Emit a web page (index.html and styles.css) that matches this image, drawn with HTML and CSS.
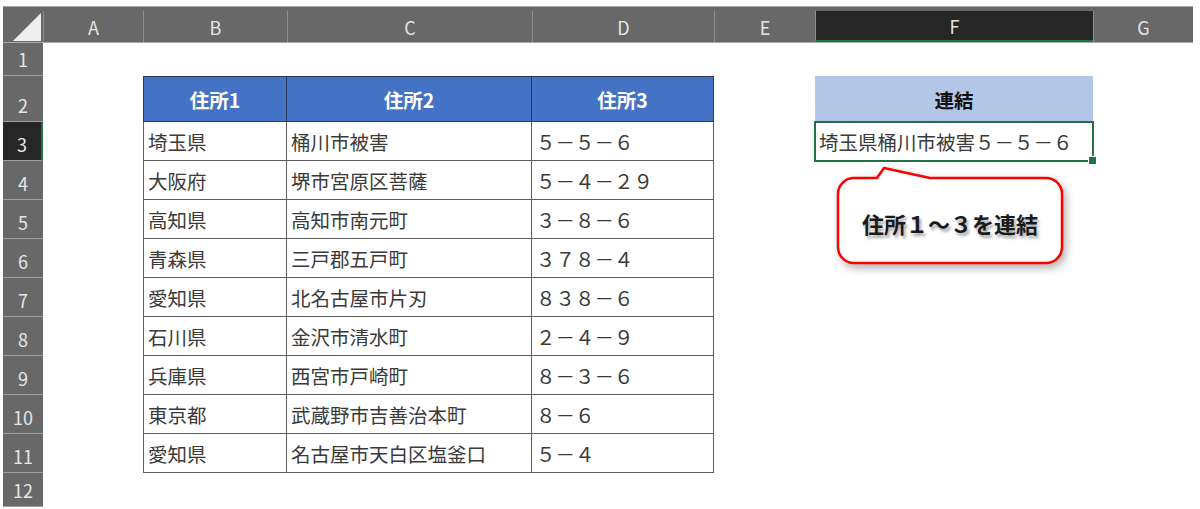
FILE: index.html
```html
<!DOCTYPE html>
<html lang="ja">
<head>
    <meta charset="UTF-8">
    <meta name="viewport" content="width=device-width, initial-scale=1.0">
    <title>住所の連結</title>
    <link rel="stylesheet" href="styles.css">
</head>
<body>
    <div class="sheet">
        <div class="row head">
            <div class="corner">
                <svg width="28" height="28" viewBox="0 0 28 28"><polygon points="28,0 28,28 0,28" fill="#efefef"/></svg>
            </div>
            <div class="col">A</div>
            <div class="col">B</div>
            <div class="col">C</div>
            <div class="col">D</div>
            <div class="col">E</div>
            <div class="col active">F</div>
            <div class="col">G</div>
        </div>

        <div class="row r1"><div class="num">1</div></div>

        <div class="row r2">
            <div class="num">2</div>
            <div></div>
            <div class="th first">住所1</div>
            <div class="th">住所2</div>
            <div class="th">住所3</div>
            <div></div>
            <div class="join-head">連結</div>
        </div>

        <div class="row">
            <div class="num active">3</div>
            <div></div>
            <div class="td first">埼玉県</div>
            <div class="td">桶川市被害</div>
            <div class="td">５－５－６</div>
            <div></div>
            <div class="join-cell">埼玉県桶川市被害５－５－６</div>
        </div>

        <div class="row">
            <div class="num">4</div>
            <div></div>
            <div class="td first">大阪府</div>
            <div class="td">堺市宮原区菩薩</div>
            <div class="td">５－４－２９</div>
            <div></div>
            <div class="note-cell">
                <div class="note">
                    <svg width="250" height="115" viewBox="0 0 250 115">
                        <path d="M23 17 L47 17 L54 7 L100 17 L216 17 A16 16 0 0 1 232 33 L232 86 A16 16 0 0 1 216 102 L24 102 A16 16 0 0 1 8 86 L8 33 A16 16 0 0 1 23 17 Z" fill="#fff" stroke="#ff0000" stroke-width="2.5" stroke-linejoin="round"/>
                    </svg>
                    <div class="note-text">住所１～３を連結</div>
                </div>
            </div>
        </div>

        <div class="row">
            <div class="num">5</div>
            <div></div>
            <div class="td first">高知県</div>
            <div class="td">高知市南元町</div>
            <div class="td">３－８－６</div>
        </div>

        <div class="row">
            <div class="num">6</div>
            <div></div>
            <div class="td first">青森県</div>
            <div class="td">三戸郡五戸町</div>
            <div class="td">３７８－４</div>
        </div>

        <div class="row">
            <div class="num">7</div>
            <div></div>
            <div class="td first">愛知県</div>
            <div class="td">北名古屋市片刃</div>
            <div class="td">８３８－６</div>
        </div>

        <div class="row">
            <div class="num">8</div>
            <div></div>
            <div class="td first">石川県</div>
            <div class="td">金沢市清水町</div>
            <div class="td">２－４－９</div>
        </div>

        <div class="row">
            <div class="num">9</div>
            <div></div>
            <div class="td first">兵庫県</div>
            <div class="td">西宮市戸崎町</div>
            <div class="td">８－３－６</div>
        </div>

        <div class="row">
            <div class="num">10</div>
            <div></div>
            <div class="td first">東京都</div>
            <div class="td">武蔵野市吉善治本町</div>
            <div class="td">８－６</div>
        </div>

        <div class="row">
            <div class="num">11</div>
            <div></div>
            <div class="td first">愛知県</div>
            <div class="td">名古屋市天白区塩釜口</div>
            <div class="td">５－４</div>
        </div>

        <div class="row r12"><div class="num">12</div></div>
    </div>
</body>
</html>
```

FILE: styles.css
```css
* {
    box-sizing: border-box;
}

body {
    margin: 0;
    background: #fff;
    font-family: "Noto Sans CJK JP", "Noto Sans", sans-serif;
    color: #3a3a3a;
}

.sheet {
    margin: 6px 0 0 3px;
    width: 1190px;
}

.row {
    display: grid;
    grid-template-columns: 40px 100px 144px 245px 182px 101px 278px 100px;
    height: 39px;
}

.r1 {
    height: 33px;
}

.r2 {
    height: 46px;
}

.r12 {
    height: 34px;
}

/* column header */
.head {
    height: 37px;
    background: #686868;
    border-top: 1px solid #a8a8a8;
    border-bottom: 1px solid #ababab;
}

.corner {
    display: flex;
    align-items: flex-end;
    justify-content: flex-end;
    padding: 0 2px 1px 0;
}

.col {
    margin-top: 4px;
    border-left: 1px solid #8e8e8e;
    color: #e6e6e6;
    font-size: 18px;
    display: flex;
    align-items: center;
    justify-content: center;
}

.col.active {
    background: #262626;
    border-bottom: 2px solid #217346;
}

/* row header */
.num {
    background: #686868;
    border-bottom: 1px solid #a0a0a0;
    color: #e6e6e6;
    font-size: 18px;
    line-height: 22px;
    display: flex;
    align-items: flex-end;
    justify-content: center;
    padding-bottom: 5px;
}

.num.active {
    background: #262626;
    border-right: 2px solid #217346;
}

/* table */
.th,
.td {
    display: flex;
    align-items: center;
    font-size: 19.5px;
    white-space: nowrap;
}

.th {
    background: #4472c4;
    color: #fff;
    font-weight: bold;
    justify-content: center;
    border-top: 1px solid #2a3a5a;
    border-right: 1px solid #2a3a5a;
    border-bottom: 1px solid #2a3a5a;
}

.th.first {
    border-left: 1px solid #2a3a5a;
}

.td {
    padding-left: 4px;
    border-right: 1px solid #5e5e5e;
    border-bottom: 1px solid #5e5e5e;
}

.td.first {
    border-left: 1px solid #5e5e5e;
}

/* concatenated result */
.join-head {
    background: #b4c6e7;
    color: #111;
    font-size: 19.5px;
    font-weight: bold;
    display: flex;
    align-items: center;
    justify-content: center;
}

.join-cell {
    position: relative;
    display: flex;
    align-items: center;
    padding-left: 4px;
    font-size: 19.5px;
    white-space: nowrap;
    outline: 2px solid #217346;
    outline-offset: -1px;
}

.join-cell::after {
    content: "";
    position: absolute;
    right: -4px;
    bottom: -4px;
    width: 7px;
    height: 7px;
    background: #217346;
    border: 1px solid #fff;
}

/* callout */
.note-cell {
    position: relative;
}

.note {
    position: absolute;
    left: 15px;
    top: 0;
    width: 250px;
    height: 115px;
}

.note svg {
    display: block;
    overflow: visible;
    filter: drop-shadow(3px 4px 4px rgba(0, 0, 0, 0.3));
}

.note-text {
    position: absolute;
    left: 8px;
    top: 19px;
    width: 224px;
    height: 85px;
    display: flex;
    align-items: center;
    justify-content: center;
    font-size: 22px;
    font-weight: bold;
    color: #1a1a1a;
    text-shadow: 2px 3px 3px rgba(0, 0, 0, 0.35);
}
```
